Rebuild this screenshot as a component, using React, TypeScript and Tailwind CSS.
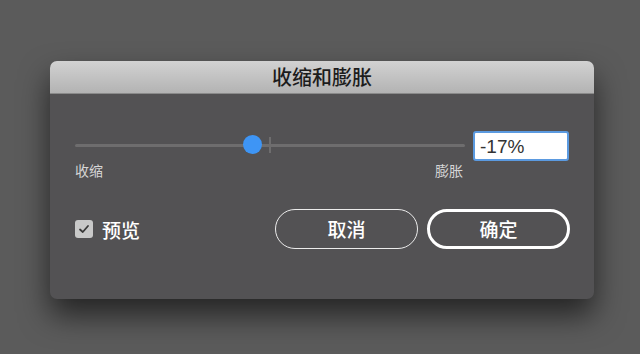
import React from "react";

export default function App() {
  const font = { fontFamily: '"Noto Sans CJK SC", "Noto Sans", sans-serif' };
  return (
    <div className="w-[640px] h-[354px] bg-[#5b5b5b] flex pt-[61px] pl-[50px]" style={font}>
      <div className="w-[544px] h-[238px] rounded-[7px] bg-[#535254] shadow-[0_16px_30px_rgba(0,0,0,0.6)] flex flex-col overflow-hidden">
        <div className="h-[33px] bg-gradient-to-b from-[#d2d2d2] to-[#b3b3b3] border-b border-[#8a8a8a] flex items-center justify-center text-[20px] font-medium text-[#1c1c1c] leading-none">
          收缩和膨胀
        </div>
        <div className="flex flex-col px-[25px]">
          <div className="flex items-start mt-[43px]">
            <div className="flex flex-col w-[390px]">
              <div className="relative h-[16px] flex items-center">
                <div className="w-full h-[3px] bg-[#6e6d6e] rounded" />
                <div className="absolute left-[194px] top-[0px] w-[2px] h-[16px] bg-[#6e6d6e]" />
                <div className="absolute left-[168px] top-[-2px] w-[19px] h-[19px] rounded-full bg-[#3e95f5]" />
              </div>
              <div className="flex justify-between mt-[10px] text-[14px] text-[#d6d6d6] leading-none">
                <span>收缩</span>
                <span className="mr-[2px]">膨胀</span>
              </div>
            </div>
            <div className="ml-[8px] -mt-[6px] w-[96px] h-[30px] bg-white border-2 border-[#5b9ae0] rounded-[3px] flex items-center px-[5px] text-[19px] text-[#333] leading-none" style={{ fontFamily: '"Liberation Sans", Arial, sans-serif' }}>
              -17%
            </div>
          </div>
          <div className="flex items-center mt-[32px]">
            <div className="w-[18px] h-[18px] rounded-[3px] bg-[#c9c9c9] flex items-center justify-center">
              <svg width="12" height="12" viewBox="0 0 12 12">
                <path d="M2 6.5 L4.8 9 L10 3" fill="none" stroke="#3a3a3a" strokeWidth="1.8" strokeLinecap="round" strokeLinejoin="round" />
              </svg>
            </div>
            <span className="ml-[9px] text-[19px] font-medium text-white leading-none">预览</span>
            <div className="flex-1" />
            <div className="w-[143px] h-[40px] rounded-full border-[1.5px] border-[#ececec] flex items-center justify-center text-[19px] font-medium text-white">
              取消
            </div>
            <div className="ml-[9px] mr-[-1px] w-[143px] h-[40px] rounded-full border-[3px] border-white flex items-center justify-center text-[19px] font-medium text-white">
              确定
            </div>
          </div>
        </div>
      </div>
    </div>
  );
}
